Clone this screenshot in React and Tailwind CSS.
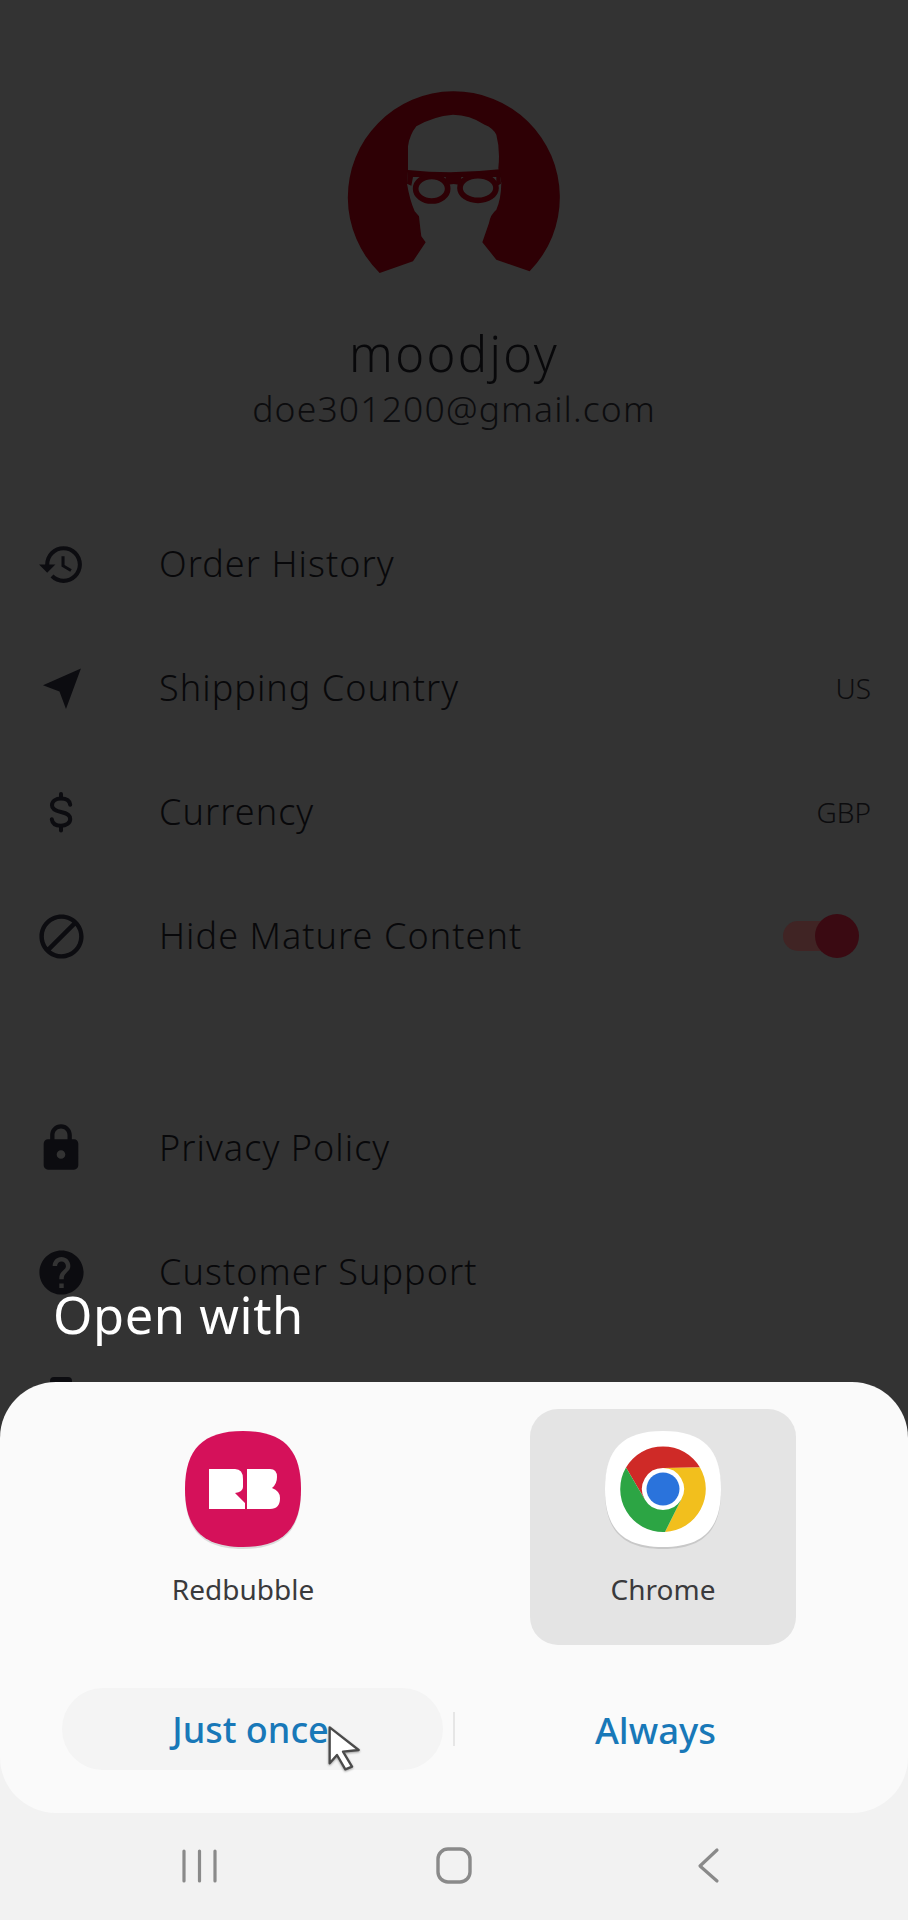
const FONT = "font-['Noto_Sans',sans-serif]";

function Row({ icon, label, right, className = "" }) {
  return (
    <div className={`flex h-[124px] items-center pr-[37px] ${className}`}>
      <div className="flex w-[159px] shrink-0">
        <div className="flex w-[122px] justify-center">{icon}</div>
      </div>
      {label && <span className="flex-1 text-[36px] leading-[44px] tracking-[1.05px] font-light text-[#08080a]">{label}</span>}
      {right}
    </div>
  );
}

const Ic = ({ children, size = 46 }) => (
  <svg viewBox="0 0 24 24" width={size} height={size} fill="#0c0c10" className="block shrink-0">{children}</svg>
);

const SQUIRCLE = "M58 0C98 0 116 18 116 58C116 98 98 116 58 116C18 116 0 98 0 58C0 18 18 0 58 0Z";

function AppIcon({ children }) {
  return (
    <svg viewBox="-1 -1 118 120" width="118" height="120" className="block shrink-0">
      <path d={SQUIRCLE} transform="translate(0 2)" fill="#000" opacity="0.12" />
      {children}
    </svg>
  );
}

export default function App() {
  return (
    <div className={`relative h-[1920px] w-[908px] overflow-hidden bg-[#333333] ${FONT}`}>
      <div className="flex flex-col">
        <div className="mt-[88px] flex justify-center pl-[2px]">
          <svg viewBox="130 85 670 570" width="223.33" height="190" className="block">
            <path d="M240 640A318 318 0 1 1 690 635L590 600L548 548L568 490Q572 465 590 450Q604 420 605 370L596 325Q602 270 590 225Q580 205 555 195Q510 165 460 165Q400 170 350 200Q330 225 325 260L325 335L322 372Q330 420 345 455L358 470Q362 510 365 530L378 548L340 605Z" fill="#2e0005" />
            <path d="M325 331Q460 345 600 329L604 372L590 380L590 352L460 352L340 352L335 378L322 372Z" fill="#2e0005" />
            <ellipse cx="396" cy="387" rx="48" ry="37" fill="#333333" stroke="#2e0005" strokeWidth="17" />
            <ellipse cx="535" cy="385" rx="54" ry="37" fill="#333333" stroke="#2e0005" strokeWidth="17" />
            <path d="M438 345H485V378Q462 368 438 378Z" fill="#2e0005" />
          </svg>
        </div>
        <div className="mt-[45px] text-center text-[49px] leading-[60px] tracking-[2.4px] font-light text-[#08080a]">moodjoy</div>
        <div className="mt-[3px] text-center text-[35.5px] leading-[44px] tracking-[1.15px] font-light text-[#0c0c0e]">doe301200@gmail.com</div>
        <div className="mt-[72px] flex flex-col">
          <Row label="Order History" icon={
            <Ic size={49}><path d="M13 3a9 9 0 0 0-9 9H1l3.89 3.89.07.14L9 12H6c0-3.87 3.13-7 7-7s7 3.13 7 7-3.13 7-7 7c-1.93 0-3.68-.79-4.94-2.06l-1.42 1.42A8.954 8.954 0 0 0 13 21a9 9 0 0 0 0-18zm-1 5v5l4.28 2.54.72-1.21-3.5-2.08V8H12z" /></Ic>
          } />
          <Row label="Shipping Country" right={<span className="text-[28px] font-light text-[#0c0c0e]">US</span>} icon={
            <Ic><path d="M22.4 1.8L2.6 10.6l8.6 3.2 3.4 9.2z" /></Ic>
          } />
          <Row label="Currency" right={<span className="text-[28px] font-light text-[#0c0c0e]">GBP</span>} icon={
            <Ic><path d="M12 2.6v2.2M12 19.4v2.2" stroke="#0c0c10" strokeWidth="2.100" strokeLinecap="round" fill="none" /><path d="M16.8 8.2C16.5 6 14.4 5 12 5c-2.6 0-4.7 1.3-4.7 3.5 0 2.3 2.2 3 4.7 3.5s4.8 1.3 4.8 3.6c0 2.2-2.2 3.6-4.800 3.600-2.500 0-4.500-1.100-4.800-3.400" stroke="#0c0c10" strokeWidth="2.100" strokeLinecap="round" fill="none" /></Ic>
          } />
          <Row label="Hide Mature Content" right={
            <div className="relative mr-[12px] h-[44px] w-[76px]">
              <div className="absolute top-[7px] left-0 h-[30px] w-[50px] rounded-l-[15px] bg-[#402424]" />
              <div className="absolute top-0 right-0 h-[44px] w-[44px] rounded-full bg-[#3a0a12]" />
            </div>
          } icon={
            <Ic size={53}><path d="M12 2C6.48 2 2 6.48 2 12s4.48 10 10 10 10-4.48 10-10S17.52 2 12 2zM4 12c0-4.42 3.58-8 8-8 1.85 0 3.55.63 4.9 1.69L5.69 16.9A7.902 7.902 0 0 1 4 12zm8 8c-1.85 0-3.55-.63-4.9-1.69L18.31 7.1A7.902 7.902 0 0 1 20 12c0 4.42-3.58 8-8 8z" /></Ic>
          } />
          <Row className="mt-[88px]" label="Privacy Policy" icon={
            <Ic size={52}><path d="M18 8h-1V6c0-2.76-2.24-5-5-5S7 3.24 7 6v2H6c-1.1 0-2 .9-2 2v10c0 1.1.9 2 2 2h12c1.1 0 2-.9 2-2V10c0-1.1-.9-2-2-2zm-6 9c-1.1 0-2-.9-2-2s.9-2 2-2 2 .9 2 2-.9 2-2 2zM9 8V6c0-1.66 1.34-3 3-3s3 1.34 3 3v2H9z" /></Ic>
          } />
          <Row label="Customer Support" icon={
            <Ic size={53}><path d="M12 2C6.48 2 2 6.48 2 12s4.48 10 10 10 10-4.48 10-10S17.52 2 12 2zm1 17h-2v-2h2v2zm2.07-7.75l-.9.92C13.45 12.9 13 13.5 13 15h-2v-.5c0-1.1.45-2.1 1.17-2.83l1.24-1.26c.37-.36.59-.86.59-1.41 0-1.1-.9-2-2-2s-2 .9-2 2H8c0-2.21 1.79-4 4-4s4 1.79 4 4c0 .88-.36 1.68-.93 2.25z" /></Ic>
          } />
          <Row icon={
            <svg viewBox="0 0 22 40" width="22" height="40" fill="#0c0c10" className="mt-[2px] block shrink-0"><path d="M4 0H18Q22 0 22 4V40H0V4Q0 0 4 0Z" /></svg>
          } />
        </div>
      </div>

      <div className="absolute inset-x-0 bottom-0 flex flex-col">
        <div className="pb-[33px] pl-[53px] text-[50.5px] leading-[68px] font-normal tracking-[0.6px] text-white">Open with</div>
        <div className="bg-[linear-gradient(transparent_50%,#f2f2f2_50%)]">
          <div className="flex h-[431px] flex-col rounded-[56px] bg-[#fafafa] pt-[27px]">
            <div className="flex justify-between pr-[112px] pl-[110px]">
              <div className="flex h-[236px] w-[266px] flex-col items-center pt-[21px]">
                <AppIcon>
                  <path d={SQUIRCLE} fill="#d5115a" />
                  <path d="M24 38H50Q58 38 58 48V56Q58 61 50 62L60 72V78H24Z" fill="#fff" />
                  <path d="M62 38H85Q92 38 92 46Q92 53 87 57Q95 60 95 67Q95 78 85 78H62Z" fill="#fff" />
                </AppIcon>
                <span className="mt-[21px] text-[28px] leading-[36px] text-[#3a3a3c]">Redbubble</span>
              </div>
              <div className="flex h-[236px] w-[266px] flex-col items-center rounded-[28px] bg-[#e4e4e4] pt-[21px]">
                <AppIcon>
                  <path d={SQUIRCLE} fill="#ffffff" />
                  <g transform="translate(58 58)">
                    <path d="M-37-21.5A43 43 0 0 1 37-21.5L0-21A21 21 0 0 0-18.2 10.5Z" fill="#cf2a27" />
                    <path d="M37-21.5A43 43 0 0 1 2 43L18.2 10.5A21 21 0 0 0 0-21Z" fill="#f2bf1d" />
                    <path d="M-37-21.5A43 43 0 0 0 2 43L18.2 10.5A21 21 0 0 1-18.2 10.5Z" fill="#2ca544" />
                    <circle r="16.5" fill="#2a73dc" />
                  </g>
                </AppIcon>
                <span className="mt-[21px] text-[28px] leading-[36px] text-[#3a3a3c]">Chrome</span>
              </div>
            </div>
            <div className="relative mt-[43px] flex items-center pl-[62px]">
              <div className="flex h-[82px] w-[381px] items-center justify-center rounded-full bg-[#f4f4f4] pt-[2px] pr-[4px] text-[36px] font-medium text-[#1878b8]">Just once</div>
              <div className="ml-[10px] h-[34px] w-[2px] bg-[#e6e6e6]" />
              <div className="flex flex-1 justify-center pt-[2px] pr-[52px] text-[36.5px] font-medium text-[#1878b8]">Always</div>
              <svg viewBox="860 165 105 140" width="35" height="46.7" className="absolute top-[37px] left-[327px] drop-shadow-[0_1px_1px_rgba(0,0,0,0.35)]">
                <path d="M868 172L955 240L908 245L935 290L915 298L890 255L868 280Z" fill="#fff" stroke="#4a4a4a" strokeWidth="7" strokeLinejoin="round" />
              </svg>
            </div>
          </div>
        </div>
        <div className="flex h-[107px] items-center bg-[#f2f2f2] pb-[1px]">
          <svg viewBox="0 0 908 40" width="908" height="40" className="block" fill="none" stroke="#8a8a8a" strokeLinecap="round" strokeLinejoin="round">
            <path d="M184 5V35M199.500 5V35M215 5V35" strokeWidth="3.200" />
            <rect x="438" y="3" width="32" height="33" rx="10" strokeWidth="3.400" />
            <path d="M717 4L700 20L717 35" strokeWidth="3.200" />
          </svg>
        </div>
      </div>
    </div>
  );
}
